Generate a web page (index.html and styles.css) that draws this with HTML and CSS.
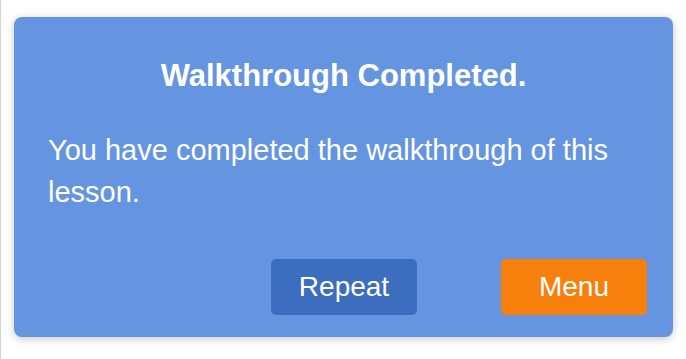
FILE: index.html
```html
<!DOCTYPE html>
<html lang="en">
<head>
  <meta charset="UTF-8" />
  <meta name="viewport" content="width=device-width, initial-scale=1.0"/>
  <title>Walkthrough Completed</title>
  <link rel="stylesheet" href="styles.css">
</head>
<body>

  <div class="dialog">
    <h2 class="dialog-title">Walkthrough Completed.</h2>
    <p class="dialog-text">You have completed the walkthrough of this lesson.</p>
    <div class="dialog-actions">
      <button class="btn btn-repeat">Repeat</button>
      <button class="btn btn-menu">Menu</button>
    </div>
  </div>

</body>
</html>
```

FILE: styles.css
```css
html, body { height: 100%; }
body { font-family: "Liberation Sans", Arial, Helvetica, sans-serif; margin: 0; padding: 17px 13px 0 13px; background: #fff; border-left: 1px solid #d4d4d4; box-sizing: border-box; }
.dialog { height: 320px; box-sizing: border-box; background: #6595e0; border-radius: 8px; box-shadow: 0 2px 8px rgba(0, 0, 0, 0.22); padding: 41px 26px 22px; display: flex; flex-direction: column; color: #fff; }
.dialog-title { margin: 0; font-size: 31px; line-height: 36px; font-weight: bold; text-align: center; }
.dialog-text { margin: 35px 0 0; padding-left: 8px; font-size: 29px; line-height: 42px; }
.dialog-actions { margin-top: auto; display: flex; justify-content: flex-end; gap: 84px; }
.btn { width: 146px; height: 56px; border: none; border-radius: 5px; color: #fff; font-family: inherit; font-size: 28px; line-height: 32px; padding: 0; cursor: pointer; }
.btn-repeat { background: #3d6dbf; }
.btn-menu { background: #f77f0c; }
```
